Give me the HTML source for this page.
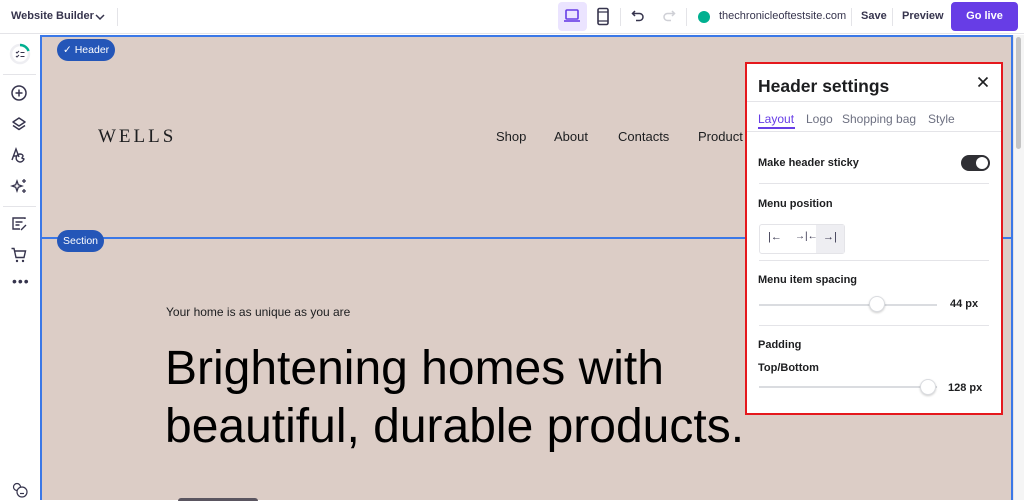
<!DOCTYPE html>
<html><head><style>
*{margin:0;padding:0;box-sizing:border-box}
body{width:1024px;height:500px;overflow:hidden;font-family:"Liberation Sans",sans-serif;background:#fff;position:relative;color:#1d1e20}
.a{position:absolute}
.top{left:0;top:0;width:1024px;height:34px;border-bottom:1px solid #e4e4e8;background:#fff}
.side{left:0;top:35px;width:39px;height:465px;background:#fff}
.canvas{left:40px;top:35px;width:973px;height:465px;background:#dccdc6;border-left:2px solid #3b78e7;border-top:2px solid #3b78e7}
.pill{background:#2456b8;color:#fff;font-size:10.5px;border-radius:11px;height:22px;line-height:22px;padding:0 6px}
.nav{font-size:13px;color:#1d1e20;top:129px}
.panel{left:745px;top:62px;width:258px;height:353px;border:2px solid #e5181d;background:#fff}
.lbl{font-size:11px;font-weight:bold;color:#1d1e20}
.hr{height:1px;background:#e4e4e8;left:12px;width:230px}
svg{display:block}
</style></head><body>
<div class="a top">
 <div class="a" style="left:11px;top:10px;font-size:11px;font-weight:bold;color:#36344d">Website Builder</div>
 <svg class="a" style="left:95px;top:12px" width="10" height="10" viewBox="0 0 10 10"><path d="M1 3l4 4 4-4" stroke="#36344d" stroke-width="1.5" fill="none"/></svg>
 <div class="a" style="left:117px;top:8px;width:1px;height:18px;background:#e4e4e8"></div>
 <div class="a" style="left:558px;top:2px;width:29px;height:29px;background:#ebe4ff;border-radius:4px"></div>
 <svg class="a" style="left:563px;top:8px" width="18" height="16" viewBox="0 0 18 16"><rect x="3" y="2" width="12" height="9" rx="1" stroke="#673de6" stroke-width="1.6" fill="none"/><path d="M1 13h16" stroke="#673de6" stroke-width="1.6"/></svg>
 <svg class="a" style="left:596px;top:7px" width="14" height="19" viewBox="0 0 14 19"><rect x="2" y="1.5" width="10" height="16" rx="1.5" stroke="#36344d" stroke-width="1.6" fill="none"/><path d="M2 5h10M2 14h10" stroke="#36344d" stroke-width="1.2"/></svg>
 <div class="a" style="left:620px;top:8px;width:1px;height:18px;background:#e4e4e8"></div>
 <svg class="a" style="left:631px;top:9px" width="14" height="14" viewBox="0 0 14 14"><path d="M4 2L1.5 4.5 4 7M1.5 4.5h7a3.5 3.5 0 010 7H5" stroke="#36344d" stroke-width="1.5" fill="none"/></svg>
 <svg class="a" style="left:662px;top:9px" width="14" height="14" viewBox="0 0 14 14"><path d="M10 2l2.5 2.5L10 7M12.5 4.5h-7a3.5 3.5 0 000 7H9" stroke="#cfd0d6" stroke-width="1.5" fill="none"/></svg>
 <div class="a" style="left:686px;top:8px;width:1px;height:18px;background:#e4e4e8"></div>
 <div class="a" style="left:698px;top:11px;width:12px;height:12px;border-radius:50%;background:#00b090"></div>
 <div class="a" style="left:719px;top:10px;font-size:11px;color:#36344d">thechronicleoftestsite.com</div>
 <div class="a" style="left:851px;top:8px;width:1px;height:18px;background:#e4e4e8"></div>
 <div class="a" style="left:861px;top:10px;font-size:11px;font-weight:bold;color:#36344d">Save</div>
 <div class="a" style="left:892px;top:8px;width:1px;height:18px;background:#e4e4e8"></div>
 <div class="a" style="left:902px;top:10px;font-size:11px;font-weight:bold;color:#36344d">Preview</div>
 <div class="a" style="left:951px;top:2px;width:67px;height:29px;background:#673de6;border-radius:4px;color:#fff;font-size:11px;font-weight:bold;text-align:center;line-height:29px">Go live</div>
</div>
<div class="a side">
 <svg class="a" style="left:9px;top:8px" width="22" height="22" viewBox="0 0 22 22"><circle cx="11" cy="11" r="9" stroke="#eeeef2" stroke-width="2.5" fill="none"/><path d="M11 2a9 9 0 018.5 6" stroke="#00b090" stroke-width="2.5" fill="none"/><path d="M7 9l1 1 2-2M7 13l1 1 2-2M11.5 9.5h4M11.5 13.5h4" stroke="#36344d" stroke-width="1" fill="none"/></svg>
 <div class="a" style="left:3px;top:39px;width:33px;height:1px;background:#e4e4e8"></div>
 <svg class="a" style="left:10px;top:49px" width="18" height="18" viewBox="0 0 18 18"><circle cx="9" cy="9" r="7" stroke="#36344d" stroke-width="1.5" fill="none"/><path d="M9 5.5v7M5.5 9h7" stroke="#36344d" stroke-width="1.5"/></svg>
 <svg class="a" style="left:10px;top:80px" width="18" height="18" viewBox="0 0 18 18"><path d="M9 3l6 4-6 4-6-4z M3 10.5l6 4 6-4" stroke="#36344d" stroke-width="1.5" fill="none" stroke-linejoin="round"/></svg>
 <svg class="a" style="left:10px;top:111px" width="18" height="18" viewBox="0 0 18 18"><path d="M2 14L6 3l3 8M3.5 10h4" stroke="#36344d" stroke-width="1.4" fill="none"/><path d="M10 8a4 4 0 104 5c-1-1-2 0-2-1s1-1 1-2-1-2-3-2z" stroke="#36344d" stroke-width="1.4" fill="none"/></svg>
 <svg class="a" style="left:10px;top:142px" width="18" height="18" viewBox="0 0 18 18"><path d="M7 4l1.3 3.7L12 9l-3.7 1.3L7 14l-1.3-3.7L2 9l3.7-1.3z" stroke="#36344d" stroke-width="1.3" fill="none"/><path d="M14 2v4M12 4h4M14 12v4M12 14h4" stroke="#36344d" stroke-width="1.3"/></svg>
 <div class="a" style="left:3px;top:171px;width:33px;height:1px;background:#e4e4e8"></div>
 <svg class="a" style="left:10px;top:180px" width="18" height="18" viewBox="0 0 18 18"><path d="M15 4V3H3v11h7M5.5 7h7M5.5 10h4M11 15l5-5" stroke="#36344d" stroke-width="1.4" fill="none"/></svg>
 <svg class="a" style="left:10px;top:211px" width="18" height="18" viewBox="0 0 18 18"><path d="M1.5 2.5h2.5l2 9h8l1.5-6.5H5" stroke="#36344d" stroke-width="1.4" fill="none"/><circle cx="7" cy="15" r="1.2" fill="#36344d"/><circle cx="13" cy="15" r="1.2" fill="#36344d"/></svg>
 <div class="a" style="left:12px;top:243px;font-size:14px;letter-spacing:1px;color:#36344d;line-height:6px">•••</div>
 <svg class="a" style="left:11px;top:446px" width="18" height="18" viewBox="0 0 18 18"><circle cx="6" cy="6" r="3.5" stroke="#36344d" stroke-width="1.2" fill="none"/><circle cx="11" cy="11" r="5" stroke="#36344d" stroke-width="1.2" fill="#fff"/><path d="M9 12.5h4" stroke="#36344d" stroke-width="1.2"/></svg>
</div>
<div class="a canvas"></div>
<div class="a" style="left:1013px;top:35px;width:11px;height:465px;background:#f5f5f5;border-left:1px solid #e4e4e8"></div>
<div class="a" style="left:1016px;top:37px;width:5px;height:112px;background:#c4c4c4;border-radius:3px"></div>
<div class="a" style="left:1011px;top:35px;width:2px;height:465px;background:#3b78e7"></div>
<div class="a" style="left:40px;top:237px;width:973px;height:2px;background:#3b78e7"></div>
<div class="a pill" style="left:57px;top:39px">✓ Header</div>
<div class="a pill" style="left:57px;top:230px">Section</div>
<div class="a" style="left:98px;top:126px;font-family:'Liberation Serif',serif;font-size:19px;letter-spacing:3px;color:#1d1e20">WELLS</div>
<div class="a nav" style="left:496px">Shop</div>
<div class="a nav" style="left:554px">About</div>
<div class="a nav" style="left:618px">Contacts</div>
<div class="a nav" style="left:698px">Product L</div>
<div class="a" style="left:166px;top:305px;font-size:12px">Your home is as unique as you are</div>
<div class="a" style="left:165px;top:340px;font-size:48px;line-height:58px;color:#000">Brightening homes with<br>beautiful, durable products.</div>
<div class="a" style="left:178px;top:498px;width:80px;height:3px;background:#5a5560;border-radius:3px 3px 0 0"></div>
<div class="a panel">
 <div class="a" style="left:11px;top:12px;font-size:17.5px;font-weight:bold">Header settings</div>
 <svg class="a" style="left:230px;top:12px" width="12" height="12" viewBox="0 0 12 12"><path d="M1.5 1.5l9 9M10.5 1.5l-9 9" stroke="#1d1e20" stroke-width="1.6"/></svg>
 <div class="a hr" style="top:37px;left:0;width:254px"></div>
 <div class="a" style="left:11px;top:48px;font-size:12px;color:#673de6">Layout</div>
 <div class="a" style="left:11px;top:63px;width:37px;height:2px;background:#673de6"></div>
 <div class="a" style="left:59px;top:48px;font-size:12px;color:#6d7081">Logo</div>
 <div class="a" style="left:95px;top:48px;font-size:12px;color:#6d7081">Shopping bag</div>
 <div class="a" style="left:181px;top:48px;font-size:12px;color:#6d7081">Style</div>
 <div class="a hr" style="top:67px;left:0;width:254px"></div>
 <div class="a lbl" style="left:11px;top:93px">Make header sticky</div>
 <div class="a" style="left:214px;top:91px;width:29px;height:16px;background:#2f2f34;border-radius:8px"></div>
 <div class="a" style="left:229px;top:93px;width:12px;height:12px;background:#fff;border-radius:50%"></div>
 <div class="a hr" style="top:119px"></div>
 <div class="a lbl" style="left:11px;top:134px">Menu position</div>
 <div class="a" style="left:12px;top:160px;width:86px;height:30px;border:1px solid #e4e4e8;border-radius:3px"></div>
 <div class="a" style="left:69px;top:161px;width:28px;height:28px;background:#eeeef2"></div>
 <div class="a" style="left:21px;top:167px;font-size:11px;color:#36344d">|←</div>
 <div class="a" style="left:48px;top:167px;font-size:10px;color:#36344d">→|←</div>
 <div class="a" style="left:76px;top:167px;font-size:11px;color:#36344d">→|</div>
 <div class="a hr" style="top:196px"></div>
 <div class="a lbl" style="left:11px;top:210px">Menu item spacing</div>
 <div class="a" style="left:12px;top:240px;width:178px;height:2px;background:#dadce0"></div>
 <div class="a" style="left:122px;top:232px;width:16px;height:16px;background:#fff;border:1px solid #dadce0;border-radius:50%;box-shadow:0 1px 2px rgba(0,0,0,.2)"></div>
 <div class="a lbl" style="left:203px;top:234px">44 px</div>
 <div class="a hr" style="top:261px"></div>
 <div class="a lbl" style="left:11px;top:275px">Padding</div>
 <div class="a lbl" style="left:11px;top:298px">Top/Bottom</div>
 <div class="a" style="left:12px;top:322px;width:178px;height:2px;background:#dadce0"></div>
 <div class="a" style="left:173px;top:315px;width:16px;height:16px;background:#fff;border:1px solid #dadce0;border-radius:50%;box-shadow:0 1px 2px rgba(0,0,0,.2)"></div>
 <div class="a lbl" style="left:201px;top:318px">128 px</div>
</div>
</body></html>
